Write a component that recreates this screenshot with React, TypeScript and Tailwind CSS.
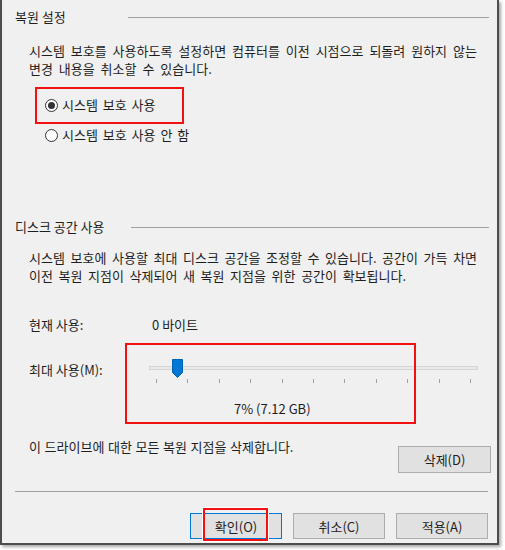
const FONT = "font-['Noto_Sans_CJK_KR','Noto_Sans_CJK_SC',sans-serif]"

const TICKS = Array.from({ length: 11 }, (_, i) => i)

function GroupHeader({ label, labelWidth }: { label: string; labelWidth: string }) {
  return (
    <div className="flex h-[16px] items-center">
      <span className={`pl-[13px] ${labelWidth} leading-[16px]`}>{label}</span>
      <div className="mr-[8px] h-px flex-1 bg-[#a0a0a0]" />
    </div>
  )
}

function Radio({ checked, label }: { checked?: boolean; label: string }) {
  return (
    <div className="flex h-[18px] items-center pl-[43px]">
      <span className="flex h-[13px] w-[13px] items-center justify-center rounded-full border border-[#333] bg-white">
        {checked ? <span className="h-[7px] w-[7px] rounded-full bg-[#333]" /> : null}
      </span>
      <span className="ml-[4px] leading-[18px] [word-spacing:2px]">{label}</span>
    </div>
  )
}

function DialogButton({ label, primary }: { label: string; primary?: boolean }) {
  return (
    <button
      type="button"
      className={`h-[26px] w-[92px] border text-[13px] leading-none text-[#1e1e1e] ${
        primary ? 'border-[#0078d7] bg-[#e1e1e1]' : 'border-[#adadad] bg-[#e1e1e1]'
      }`}
    >
      {label}
    </button>
  )
}

export default function App() {
  return (
    <div className={`h-[550px] w-[505px] bg-white ${FONT} text-[13px] text-[#1e1e1e]`}>
      <div className="relative h-[545px] w-[499px] border-b-2 border-l-2 border-r-2 border-[#4d4d4d] bg-[#f0f0f0] shadow-[2px_2px_3px_rgba(0,0,0,0.35)]">
        <div className="pt-[9px]">
          <GroupHeader label="복원 설정" labelWidth="w-[126px]" />
        </div>

        <p className="mt-[17px] pl-[27px] leading-[18px] [word-spacing:3px]">
          시스템 보호를 사용하도록 설정하면 컴퓨터를 이전 시점으로 되돌려 원하지 않는
          <br />
          변경 내용을 취소할 수 있습니다.
        </p>

        <div className="mt-[18px]">
          <Radio checked label="시스템 보호 사용" />
        </div>
        <div className="mt-[12px]">
          <Radio label="시스템 보호 사용 안 함" />
        </div>

        <div className="mt-[75px]">
          <GroupHeader label="디스크 공간 사용" labelWidth="w-[129px]" />
        </div>

        <p className="mt-[14px] pl-[27px] leading-[18px] [word-spacing:2.7px]">
          시스템 보호에 사용할 최대 디스크 공간을 조정할 수 있습니다. 공간이 가득 차면
          <br />
          이전 복원 지점이 삭제되어 새 복원 지점을 위한 공간이 확보됩니다.
        </p>

        <div className="mt-[31px] flex h-[18px] items-center pl-[27px] leading-[18px]">
          <span className="w-[123px]">현재 사용:</span>
          <span>0 바이트</span>
        </div>

        <div className="mt-[22px] flex items-start pl-[27px]">
          <span className="mt-[6px] w-[120px] leading-[16px]">최대 사용(M):</span>
          <div className="relative w-[329px] pt-[10px]">
            <div className="h-[4px] border border-[#d6d6d6] bg-[#e7eaea]" />
            <div className="mt-[9px] flex justify-between px-[7px]">
              {TICKS.map((tick) => (
                <span key={tick} className="h-[4px] w-px bg-[#a0a0a0]" />
              ))}
            </div>
            <svg className="absolute left-[23px] top-[3px]" width="11" height="19" viewBox="0 0 11 19">
              <path d="M0.5 0.5 H10.5 V13.5 L5.5 18.5 L0.5 13.5 Z" fill="#0078d7" stroke="#0063b1" />
            </svg>
          </div>
        </div>

        <div className="mt-[18px] pl-[232px] leading-[16px]">7% (7.12 GB)</div>

        <div className="mt-[22px] flex items-start justify-between pl-[27px] pr-[6px]">
          <span className="leading-[16px] [word-spacing:0.7px]">이 드라이브에 대한 모든 복원 지점을 삭제합니다.</span>
          <button
            type="button"
            className="mt-[7px] h-[27px] w-[93px] border border-[#adadad] bg-[#e1e1e1] text-[13px] leading-none text-[#1e1e1e]"
          >
            삭제(D)
          </button>
        </div>

        <div className="ml-[13px] mr-[9px] mt-[18px] h-px bg-[#a0a0a0]" />

        <div className="mt-[21px] flex justify-end gap-[11px] pr-[9px]">
          <DialogButton primary label="확인(O)" />
          <DialogButton label="취소(C)" />
          <DialogButton label="적용(A)" />
        </div>

        {/* annotation boxes drawn over the dialog */}
        <div className="absolute left-[33px] top-[87px] h-[37px] w-[149px] border-2 border-[#f31010]" />
        <div className="absolute left-[123px] top-[343px] h-[81px] w-[291px] border-2 border-[#f31010]" />
        <div className="absolute left-[201px] top-[508px] h-[33px] w-[65px] border-2 border-[#f31010] outline outline-1 outline-white" />
      </div>
    </div>
  )
}
